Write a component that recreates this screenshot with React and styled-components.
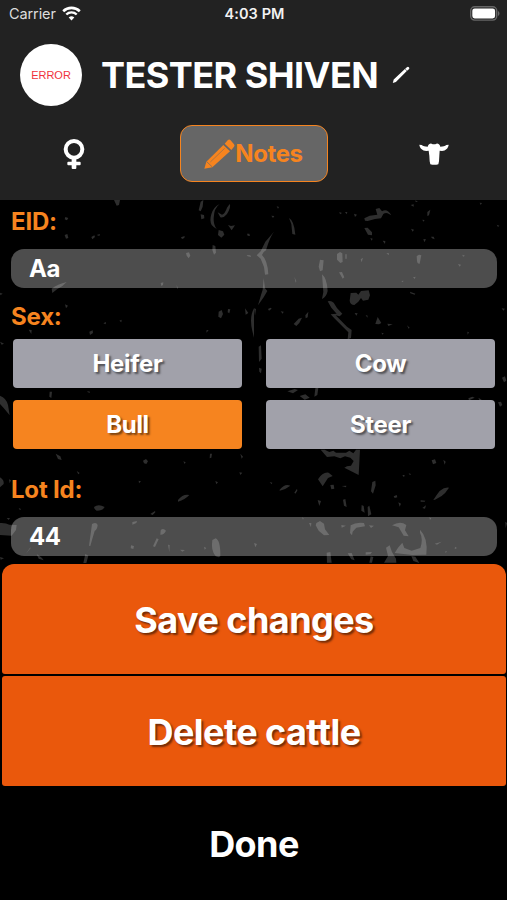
import React, { useState } from 'react';
import styled, { ThemeProvider, createGlobalStyle } from 'styled-components';

const theme = {
	charcoal: '#222222',
	black: '#000000',
	white: '#FFFFFF',
	orange: '#F6841F',
	deepOrange: '#EA580C',
	grey: '#A1A1AA',
	tab: '#666666',
};

const GlobalStyle = createGlobalStyle`
	body {
		margin: 0;
		background-color: #000000;
		font-family: Inter, 'Liberation Sans', sans-serif;
	}

	button,
	input {
		font-family: inherit;
	}
`;

const Screen = styled.div`
	display: flex;
	flex-direction: column;
	height: 900px;
	overflow: hidden;
	background-color: ${(props) => props.theme.black};
	color: ${(props) => props.theme.white};
`;

const Header = styled.header`
	box-sizing: border-box;
	height: 200px;
	background-color: ${(props) => props.theme.charcoal};
`;

const StatusBar = styled.div`
	display: grid;
	grid-template-columns: 1fr auto 1fr;
	align-items: center;
	height: 27px;
	padding: 0 7px 0 9px;
`;

const Carrier = styled.div`
	display: flex;
	align-items: center;
	gap: 6px;
	color: #dddddd;
	font-size: 14.5px;
	letter-spacing: -0.1px;
`;

const Clock = styled.div`
	font-size: 14.5px;
	font-weight: 600;
	letter-spacing: 0.1px;
	color: #f2f2f2;
`;

const BatteryIcon = styled.svg`
	justify-self: end;
`;

const TitleRow = styled.div`
	display: flex;
	align-items: center;
	height: 62px;
	padding: 17px 20px 0;
`;

const Avatar = styled.div`
	display: flex;
	align-items: center;
	justify-content: center;
	width: 62px;
	height: 62px;
	border-radius: 50%;
	background-color: ${(props) => props.theme.white};
	color: #f0323c;
	font-family: 'Liberation Sans', Arial, sans-serif;
	font-size: 11px;
`;

const Title = styled.h1`
	margin: 0 14px 0 19px;
	font-size: 36px;
	font-weight: 700;
	line-height: 1;
	white-space: nowrap;
	letter-spacing: -0.55px;
`;

const Tabs = styled.nav`
	display: grid;
	grid-template-columns: 148px 148px 148px;
	justify-content: center;
	gap: 32px;
	padding-top: 19px;
`;

const Tab = styled.button`
	display: flex;
	align-items: center;
	justify-content: center;
	height: 57px;
	padding: 0;
	border: 1.5px solid
		${(props) => (props.$active ? props.theme.orange : 'transparent')};
	border-radius: 12px;
	background-color: ${(props) =>
		props.$active ? props.theme.tab : 'transparent'};
	color: ${(props) => props.theme.orange};
	font-size: 24px;
	font-weight: 700;
	letter-spacing: -0.4px;
`;

const Form = styled.main`
	position: relative;
	box-sizing: border-box;
	height: 364px;
	padding: 0 10px 0 11px;
`;

const Grunge = styled.svg`
	position: absolute;
	inset: 0;
	width: 100%;
	height: 100%;
	fill: #2e2e2e;
`;

const Fields = styled.div`
	position: relative;
`;

const Label = styled.label`
	display: block;
	box-sizing: border-box;
	height: ${(props) => props.$height}px;
	padding-top: ${(props) => props.$top}px;
	color: ${(props) => props.theme.orange};
	font-size: 24px;
	font-weight: 650;
	letter-spacing: -0.2px;
	line-height: 30px;
`;

const Input = styled.input`
	display: block;
	box-sizing: border-box;
	width: 100%;
	height: 39px;
	padding: 0 18px;
	border: none;
	border-radius: 13px;
	background-color: rgba(255, 255, 255, 0.3);
	color: ${(props) => props.theme.white};
	font-size: 24px;
	font-weight: 700;
	letter-spacing: -0.4px;
`;

const OptionGrid = styled.div`
	display: grid;
	grid-template-columns: 1fr 1fr;
	gap: 12px 24px;
	padding: 0 2px;
`;

const Option = styled.button`
	height: 49px;
	padding: 0;
	border: none;
	border-radius: 4px;
	background-color: ${(props) =>
		props.$selected ? props.theme.orange : props.theme.grey};
	color: ${(props) => props.theme.white};
	font-size: 24px;
	font-weight: 700;
	letter-spacing: -0.3px;
	text-shadow: 2px 2px 2px rgba(0, 0, 0, 0.5);
`;

const Actions = styled.div`
	display: flex;
	flex-direction: column;
	gap: 2px;
	padding: 0 1px 0 2px;
`;

const ActionButton = styled.button`
	height: 110px;
	padding: 2px 0 0;
	border: none;
	border-radius: ${(props) => (props.$first ? '12px 12px 3px 3px' : '3px')};
	background-color: ${(props) =>
		props.$plain ? 'transparent' : props.theme.deepOrange};
	color: ${(props) => props.theme.white};
	font-size: 36px;
	font-weight: 700;
	letter-spacing: -0.55px;
	text-shadow: 2px 2px 2px rgba(0, 0, 0, 0.5);
`;

const WifiIcon = () => (
	<svg width='19' height='15' viewBox='0 0 19 15' fill='none' stroke='#fff'>
		<path d='M1.2 5.2a12 12 0 0 1 16.6 0' strokeWidth='2.6' />
		<path d='M4.3 8.5a7.4 7.4 0 0 1 10.4 0' strokeWidth='2.4' />
		<path d='M9.5 14.4l-2.8-3a4.2 4.2 0 0 1 5.6 0z' fill='#fff' stroke='none' />
	</svg>
);

const Battery = () => (
	<BatteryIcon width='30' height='15' viewBox='0 0 30 15'>
		<rect x='0.7' y='0.7' width='26' height='13.4' rx='4' fill='#222' stroke='#666' strokeWidth='1.4' />
		<rect x='2.3' y='2.4' width='22.8' height='10' rx='2.4' fill='#fff' />
		<path d='M28 5v5c2-1 2-4 0-5z' fill='#666' />
	</BatteryIcon>
);

const EditIcon = () => (
	<svg width='18' height='18' viewBox='0 0 18 18' fill='#fff'>
		<path d='M0.8 17l0.9-3.4L12.9 3.1l1.9 2L3.9 16zM13.2 2.8l1.7-1.6a1.4 1.4 0 0 1 2 2L15.1 4.8z' />
	</svg>
);

const FemaleIcon = () => (
	<svg width='22' height='30' viewBox='0 0 66 90'>
		<circle cx='33' cy='31' r='25' fill='none' stroke='#fff' strokeWidth='12' />
		<path
			d='M26 57h14v11h10q3 0 3 3v5q0 3-3 3H40v8q0 3-3 3h-8q-3 0-3-3v-8H16q-3 0-3-3v-5q0-3 3-3h10z'
			fill='#fff'
		/>
	</svg>
);

const PencilIcon = () => (
	<svg width='31' height='30' viewBox='0 0 93 90' fill='#F6841F'>
		<path d='M1 89L7 68 58 18l20 19-53 48z' />
		<path d='M62 14l9-10q4-4 8-1l11 13q3 4 0 7l-8 10z' />
		<path d='M8 68l17 16' stroke='#666' strokeWidth='2' fill='none' />
		<path d='M19 69l43-41' stroke='#666' strokeWidth='1.5' fill='none' />
	</svg>
);

const CowIcon = () => (
	<svg width='30' height='22' viewBox='0 0 90 66' fill='#fff'>
		<path d='M28 6q4-6 10-4l3 2h8l3-2q6-2 10 4l2 5c8 0 14-2 18-5l7-1c-1 10-9 18-20 19l-7-1-1 15-1 17-2 9q-12 3-24 0l-2-9-1-17-2-15-7 1C10 23 2 15 1 5l7 1c4 3 10 5 18 5z' />
	</svg>
);

// worn paint flecks behind the form, one group per quarter of the panel
const GrungeTexture = () => (
	<Grunge viewBox='0 0 1521 1092' preserveAspectRatio='none'>
		<g transform='translate(0 -15)'>
			<path d='M342 15h18l-3 15-7 2zM196 66l9 3-4 7-7-3zM194 120l8-3 3 12-7 2zM274 126l9-5 2 5-8 7zM290 120l10-3-2 6z' />
			<path d='M602 20l8-5-2 20-6 14-6-3zM602 58l10 2 1 10-9 3zM659 27q-17 12-18 42-1 20 9 33-8-4-15-12-7-13-1-32 6-22 25-31z' />
			<path d='M689 27q5 8-8 30-9 12-20 10l-8-15 13 7q9-3 15-21zM656 105l13 4 4 10-9 9-10-8zM684 90l9 3 12-2-6 9-4 6zM741 116l7 0 2 7-7-1zM543 127l11-4-1 6-7 3z' />
			<path d='M638 150l8 3 2 20-6 6-5-14zM558 174l9-2 4 10-5 8-6-8zM740 180l11 1 2 5-10-2zM482 264l8-2-1 8-5 3zM530 270l4 10-3 1zM155 281q18-13 45-20-11 13-29 22l-14 11z' />
			<path d='M0 293l8 3-7 5zM195 328l9 4-6 8zM656 350l9-5 4 12-6 13-8-5zM684 342l7 1-3 12-5-3zM735 340l10 14-8 5zM762 340q-15 27-5 68l5 20zM310 385l8-4-1 7zM358 377l7-3-1 8zM268 410l10-4 1 8-9 6zM86 404l9 1-1 12zM0 440l12 6-7 3zM620 405l6 1-7 7z' />
		</g>
		<g transform='translate(762 -15)'>
			<path d='M105 69q15 7 19 50l-9-2-3-30zM60 110q-13 17-24 56-11 6-12 14 17 16 19 58l-10 1-3-23-10-25-12-10 12-12 14-29z' />
			<path d='M29 249l4 31 7 8-11 19-17 24 9-31 5-16zM198 194l11 2-3 30-8 3-4-14zM204 238q15 12 17 50-4 18-17 24l4-21z' />
			<path d='M331 70l16-8 23-3-5-17 11-3 8 10q15-10 28 12l-7-4q-9-6-17 0l-7 13-18 2-22 6-8-1zM331 99l10-1 13 14 0 9-12-2zM249 177l9-6 7 4 1 26-7 3-10-10zM255 232l9-1 7 16-5 4zM274 178l4 0v13h-4zM488 184q6-8 14-3l-5 25q-7 2-8-7z' />
			<path d='M290 294l17-1 6 6 8-11 23-2 4 15-5 13-16 3-6-8-8 11-12 10q-12 0-14-13zM221 319q10-4 18 4 8 17 26 33l-8 8-12-3 34 34 14 10-2 24-10 4 2-21-42-42-11-12 18-2-16-18zM119 387l15-16 10-3-8 16-9 9zM154 361l9-11-2 17-6 3zM371 366l11 18-7 4-11-1z' />
			<path d='M42 342l8-4 3 3-8 6zM80 349l9 1-3 6zM52 62l9 1-4 6zM68 34l7 2-3 5zM256 51l8 3-6 4zM273 51l7 0-2 7zM300 56l9 3-6 7zM520 51l9-7-4 17-5 2zM470 30l9-2 0 7zM484 16l8 4-7 1zM505 74l7 1-4 5zM471 101l9 3-4 6zM508 132l8 1-5 9zM531 125l8 0 3 8-8-3zM728 89l8 3-4 4zM677 23l7 1-4 6zM386 137l8 1-1 9zM349 129l7 2-3 6z' />
			<path d='M397 174l8 1-1 6zM320 193l7-5-4 14zM121 245l6 14-2 4zM612 207l9 2-4 6zM625 179l8 3-6 3zM442 258l7-1-3 5zM477 247l8-2-3 7zM468 290l16 6-2 3-13-4zM302 354l9 1-4 7zM335 360l6 2-1 6zM400 386l16 2-13 5zM459 391l8 7-3 3zM382 413l7 2-3 4zM743 340l10 1-5 6zM640 410l5 2-4 7zM14 455l7-4 2 40-8 10zM15 518l8 3-2 14-5-5zM744 548l9-4 4 13-7 5zM0 340l6 2-3 20z' />
		</g>
		<g transform='translate(0 540)'>
			<path d='M0 47q19 7 24 28l5 31-18-22L0 72zM149 35l7 0-2 19-6-4zM260 35l8-1 2 5zM167 221l14 8 4 11-11-3zM429 242l9-5 6 7-5 8-7-2zM0 292q13 8 11 20L0 322zM27 298l6 3-4 9zM230 273l9 6-4 4zM416 302l7 2-6 6zM646 303l8 4-5 6zM630 221l6 0-2 12-5 2zM721 221l8 9-4 6zM718 277l9 1-6 7zM550 244l7 3-3 5z' />
			<path d='M534 360q15-19 34-15-13 14-34 20zM282 381q13-11 32 0-5 11-24 11-7-3-8-11zM56 384l7 3-3 4zM20 414l10 0-4 6zM451 402l14-9 1 4-8 8zM397 426l14-3-2 6-12 5zM0 429q18-1 28 5l22 1-2 15-13 17L0 465z' />
			<path d='M276 432q13-8 17 3-1 13-9 18l-6 20-7 25-4-1zM256 522l9 5-6 22h-9zM482 451q7-8 16 1-6 13-17 12zM470 475l6 3-11 23-6-2zM637 480l10-5q15 7 14 54-4 5-14 0-15-17-10-49zM393 496l9 2-2 9-8-2zM504 494l5 1-1 22zM89 505l5-3-17 20zM110 522l16 12 5 7-15-5zM0 531l12 4-10 4zM540 509l15 1-8 5zM612 500l7 4-5 5z' />
		</g>
		<g transform='translate(762 540)'>
			<path d='M100 34l22-7 10 3-15 10zM137 48l17-5 13 10-15 6zM184 25l9-2-3 22-9 5z' />
			<path d='M200 209l12 0 14 7 12-4 8 6 30 0 10-6 12 8 8-11h12l-4 76-43-22 8-4 12-2 8-14-10-10-16-4-14 6-18-6-22 2zM192 298q14-23 32-20l12 10-14 6-16 25zM229 315l10-1 2 12-9 2zM263 318l14-1-1 5zM355 306l9-4 1 14-8 25-6-7zM191 360l10 3-5 15zM267 359l7-2 4 24-8-4zM323 375l6 3 3 20-10-6zM341 381l5-4 6 26-10 6z' />
			<path d='M47 306l8 2-2 5zM77 329q16-20 32-12-15 12-32 15zM121 338l8-12 1 6-6 9zM548 345l9-12q15-12 28-10-10 16-22 25l-20 11-5 1zM533 241l10-3 4 11-10 4zM568 239l7 6-3 9zM445 285l7 0-2 7zM464 280l7 2-3 4zM419 349l9-4 2 7-8 2zM433 367l8 4-4 9zM500 361l14 1-2 3-12 0zM505 384l11-8-3 10zM732 67l9-2 4 10-7 5zM643 55l12-5 7 3-17 8zM747 0l8 6zM673 53l10 6-6 3z' />
			<path d='M187 429l11-6 12 8 3 17 13 17-16 1-16-14-9-16zM165 429l7 0-1 13zM262 435l14 2-13 6zM290 436q15-10 40-7l3 10-26 4-11 12-2 11-6-7zM345 436l15 1-9 7zM414 436q25-15 43-1l-4 16 11 18-15-2-15-25zM498 449q25 25 19 75l-43 1-52-6 10-16 13-15 6 16 22 8 26-8q9-27-1-46zM542 491l21-6-14 9zM574 514l5 0-4 6zM603 500l6 4-7 4zM396 503l11-7 7 20 12 20 1 12h-37l12-20z' />
			<path d='M218 518l11-2 4 32h-14zM281 520l12-1 9 22-10-3zM335 517l19-1-5 7-14 1zM350 529l8 2-4 17h-8zM472 528l12 2 12 19-18-6zM526 412l6 3-4 5zM754 425l5 4-4 16zM0 489l9 3-5 10zM144 412l5 3-2 4z' />
		</g>
	</Grunge>
);

const sexes = ['Heifer', 'Cow', 'Bull', 'Steer'];

function App() {
	const [eid, setEid] = useState('Aa');
	const [sex, setSex] = useState('Bull');
	const [lotId, setLotId] = useState('44');

	return (
		<ThemeProvider theme={theme}>
			<GlobalStyle />
			<Screen>
				<Header>
					<StatusBar>
						<Carrier>
							Carrier
							<WifiIcon />
						</Carrier>
						<Clock>4:03 PM</Clock>
						<Battery />
					</StatusBar>
					<TitleRow>
						<Avatar>ERROR</Avatar>
						<Title>TESTER SHIVEN</Title>
						<EditIcon />
					</TitleRow>
					<Tabs>
						<Tab>
							<FemaleIcon />
						</Tab>
						<Tab $active>
							<PencilIcon />
							Notes
						</Tab>
						<Tab>
							<CowIcon />
						</Tab>
					</Tabs>
				</Header>
				<Form>
					<GrungeTexture />
					<Fields>
						<Label htmlFor='eid' $height={49} $top={7}>
							EID:
						</Label>
						<Input
							id='eid'
							value={eid}
							onChange={(e) => setEid(e.target.value)}
						/>
						<Label as='div' $height={51} $top={14}>
							Sex:
						</Label>
						<OptionGrid>
							{sexes.map((name) => (
								<Option
									key={name}
									$selected={name === sex}
									onClick={() => setSex(name)}
								>
									{name}
								</Option>
							))}
						</OptionGrid>
						<Label htmlFor='lot' $height={68} $top={26}>
							Lot Id:
						</Label>
						<Input
							id='lot'
							value={lotId}
							onChange={(e) => setLotId(e.target.value)}
						/>
					</Fields>
				</Form>
				<Actions>
					<ActionButton $first>Save changes</ActionButton>
					<ActionButton>Delete cattle</ActionButton>
					<ActionButton $plain>Done</ActionButton>
				</Actions>
			</Screen>
		</ThemeProvider>
	);
}

export default App;
